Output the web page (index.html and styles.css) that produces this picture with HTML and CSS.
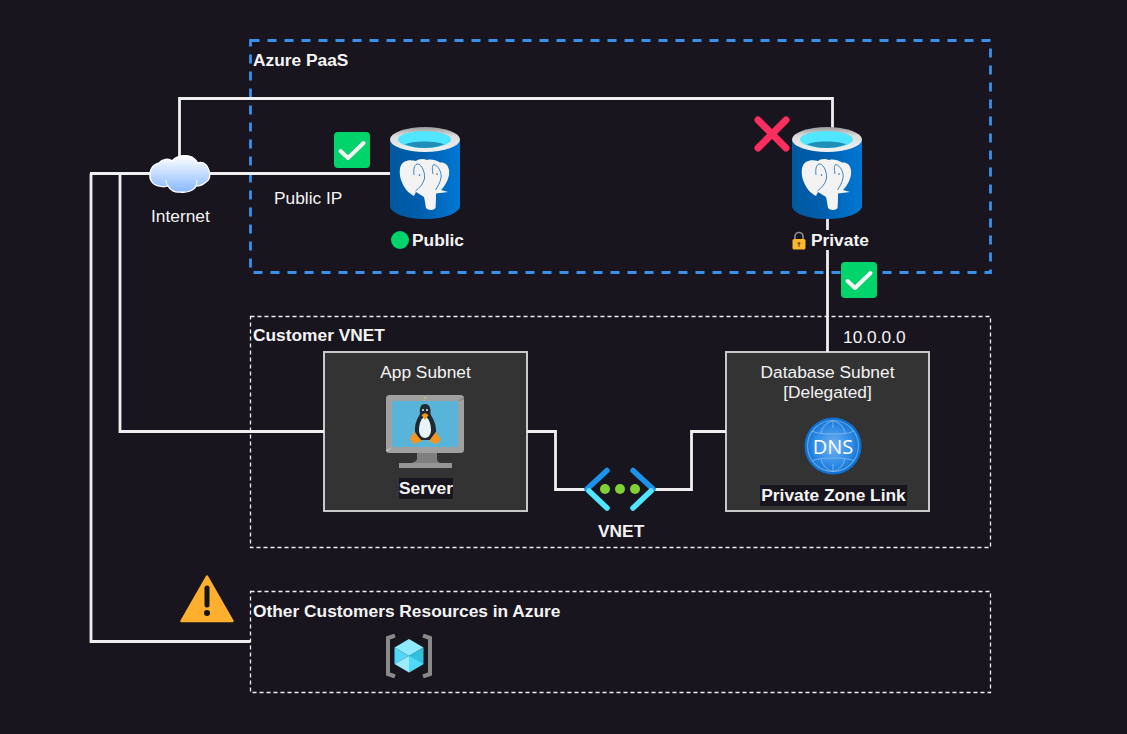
FILE: index.html
```html
<!DOCTYPE html>
<html lang="en">
<head>
<meta charset="utf-8">
<title>Azure PaaS network diagram</title>
<link rel="stylesheet" href="styles.css">
</head>
<body>
<main class="canvas">
  <svg class="layer" width="1127" height="734" viewBox="0 0 1127 734">
    <rect class="zone-line zone-blue" x="250.5" y="40.5" width="740" height="232"/>
    <rect class="zone-line zone-white" x="250.5" y="316.5" width="740" height="231"/>
    <rect class="zone-line zone-white" x="250.5" y="591.5" width="740" height="101"/>
  </svg>

  <div class="subnet subnet-app">
    <div class="subnet-title">App Subnet</div>
  </div>
  <div class="subnet subnet-db">
    <div class="subnet-title">Database Subnet<br>[Delegated]</div>
  </div>

  <svg class="layer" width="1127" height="734" viewBox="0 0 1127 734">
    <path class="wire" d="M179.5 158V98.500H832.500V132"/>
    <path class="wire" d="M90 173.500H155M205 173.500H392"/>
    <path class="wire" d="M120 173.500V431.500H324"/>
    <path class="wire" d="M91 173.500V641.500H250"/>
    <path class="wire" d="M527 431.500H555.500V489.500H590"/>
    <path class="wire" d="M650 489.500H691.500V431.500H726"/>
    <path class="wire" d="M827.500 215V352"/>
  </svg>

  <div class="zone-label label-paas">Azure PaaS</div>
  <div class="zone-label label-vnet">Customer VNET</div>
  <div class="zone-label label-other">Other Customers Resources in Azure</div>

  <div class="text text-internet">Internet</div>
  <div class="text text-ip">Public IP</div>
  <div class="text text-addr">10.0.0.0</div>

  <div class="status status-public"><span class="dot"></span><b>Public</b></div>
  <div class="status status-private">
    <svg class="lock" width="16" height="19" viewBox="0 0 16 19">
      <path d="M4 9V5.500a4 4 0 0 1 8 0V9" fill="none" stroke="#8f8f8f" stroke-width="1.600"/>
      <rect x="1.500" y="8" width="13" height="10.500" rx="1.600" fill="#fdb62f"/>
      <circle cx="8" cy="12.300" r="1.400" fill="#7a5a10"/>
      <rect x="7.400" y="12.500" width="1.200" height="3.200" fill="#7a5a10"/>
    </svg><b>Private</b>
  </div>

  <div class="tag tag-server">Server</div>
  <div class="tag tag-zone">Private Zone Link</div>
  <div class="tag-plain tag-vnet">VNET</div>

  <!-- cloud -->
  <svg class="icon icon-cloud" width="64" height="42" viewBox="0 0 64 42">
    <defs><linearGradient id="cloudFill" x1="0" y1="0" x2="0" y2="1"><stop offset="0" stop-color="#ffffff"/><stop offset="1" stop-color="#86b8ff"/></linearGradient></defs>
    <path d="M11 33C4 32 1 26 2 20C3 14 7 11 11 10C14 6 21 5 24 8C28 3 38 1 44 4C47 6 49 8 49.500 10C54 8 59 11 60.500 16C63 21 62 27 58 29C55 32 51 33 48 33C46 38 38 40 32 39C27 40 22 37 20 33C17 34 14 34 11 33Z" fill="url(#cloudFill)" stroke="#fff" stroke-width="1.300"/>
    <path d="M20 33C18 30 18 28 18 27M48 33C49 30 49 28 49 27" fill="none" stroke="#fff" stroke-width="1"/>
  </svg>

  <!-- check badges -->
  <svg class="icon icon-check-a" width="36" height="36" viewBox="0 0 36 36"><rect width="36" height="36" rx="4" fill="#00d46a"/><path d="M6.500 19L14 26L29.500 11" fill="none" stroke="#f4f4f4" stroke-width="4" stroke-linecap="round" stroke-linejoin="round"/></svg>
  <svg class="icon icon-check-b" width="36" height="36" viewBox="0 0 36 36"><rect width="36" height="36" rx="4" fill="#00d46a"/><path d="M6.500 19L14 26L29.500 11" fill="none" stroke="#f4f4f4" stroke-width="4" stroke-linecap="round" stroke-linejoin="round"/></svg>

  <!-- cross -->
  <svg class="icon icon-cross" width="40" height="40" viewBox="0 0 40 40"><path d="M5 5L33 33M33 5L5 33" stroke="#fb2e5f" stroke-width="7" stroke-linecap="round"/></svg>

  <!-- postgres cylinders -->
  <svg class="icon icon-pg-a" width="70" height="92" viewBox="0 0 70 92">
    <defs>
      <linearGradient id="pgBody" x1="0" y1="0" x2="1" y2="0"><stop offset="0" stop-color="#0058a0"/><stop offset=".45" stop-color="#005fae"/><stop offset="1" stop-color="#0078d4"/></linearGradient>
      <linearGradient id="pgRim" x1="0" y1="0" x2="0" y2="1"><stop offset="0" stop-color="#9a9a9a"/><stop offset=".35" stop-color="#dcdcdc"/><stop offset="1" stop-color="#f2f2f2"/></linearGradient>
      <symbol id="pg" viewBox="0 0 70 92">
        <path d="M0 12V79C0 86 16 92 35 92C54 92 70 86 70 79V12Z" fill="url(#pgBody)"/>
        <ellipse cx="35" cy="12.500" rx="35" ry="12.500" fill="url(#pgRim)"/>
        <ellipse cx="34.500" cy="12.500" rx="26.500" ry="8.500" fill="#50e6ff"/>
        <path d="M15 17.500C21 13.500 48 13.500 54 17.500C48 20 41 21 34.500 21C28 21 21 20 15 17.500Z" fill="#1f8fb8"/>
        <path d="M14 35C9 38 9 46 11 53C14 61 18 66 24 69L26 65L34 70C35 74 35.500 78 36 81C38 83.500 44 83.500 45.500 81C46 76 46 71 46 66.500L58 65L51 63C56 58 60 50 59 43C58 37 54 35 50 35.500C46 33 41 32 37 33C33 31 28 32 26 34C22 33 17 33 14 35Z" fill="#f3f3f3"/>
        <path d="M24 48C23 41 25 36.500 28 37C32 38 35 45 34.500 51C33.500 57 29 61 25.500 64M43 47C42 42 42 38 44 37.500C48 38.500 52 45 51 51C50 56 47.500 60 45.500 63" fill="none" stroke="#0a66b5" stroke-width=".8"/>
        <path d="M33 70C30 72 27 72 24 70" fill="none" stroke="#0a66b5" stroke-width=".8"/>
        <circle cx="29.500" cy="48" r=".8" fill="#0a66b5"/><circle cx="47" cy="47" r=".8" fill="#0a66b5"/>
      </symbol>
    </defs>
    <use href="#pg" width="70" height="92"/>
  </svg>
  <svg class="icon icon-pg-b" width="70" height="92" viewBox="0 0 70 92"><use href="#pg" width="70" height="92"/></svg>

  <!-- linux monitor -->
  <svg class="icon icon-linux" width="78" height="73" viewBox="0 0 78 73">
    <path d="M31 57H51V64C51 66 53 68 55 68H24C27 68 31 66 31 64Z" fill="#7f7f7f"/>
    <rect x="13" y="68" width="53" height="5" fill="#959595"/>
    <rect width="78" height="58" rx="3.500" fill="#a0a0a0"/>
    <path d="M0 55L6 52L1 57Z" fill="#c4c4c4"/>
    <path d="M72 6L78 1V5Z" fill="#8a8a8a"/>
    <rect x="6" y="6" width="66" height="46" fill="#59b4d9"/>
    <circle cx="39" cy="3" r="1" fill="#b8d432"/>
    <path d="M39 9C34 9 33.500 14 34 19C31 24 28.500 29 29 37L34 45H44L50 37C50.500 29 47 24 44.500 19C45 14 44 9 39 9Z" fill="#1f2a30"/>
    <path d="M39 22C35.500 22 33 29 33 35C33 40 36 43 39 43C42 43 45 40 45 35C45 29 42.500 22 39 22Z" fill="#e8f3f8"/>
    <path d="M35.500 20L39 18L42.500 20L39 25Z" fill="#f7941d"/>
    <path d="M24 44L28 37L36 46L28 49Z" fill="#f7941d"/>
    <path d="M55 45L50 37L43 46L50 49Z" fill="#f7941d"/>
    <circle cx="37" cy="15" r=".9" fill="#fff"/><circle cx="41" cy="15" r=".9" fill="#fff"/>
  </svg>

  <!-- dns globe -->
  <svg class="icon icon-dns" width="58" height="58" viewBox="0 0 58 58">
    <defs><radialGradient id="dnsFill" cx=".5" cy=".5" r=".5"><stop offset="0" stop-color="#72b4f5"/><stop offset=".7" stop-color="#2c88e4"/><stop offset="1" stop-color="#0a6ecd"/></radialGradient></defs>
    <circle cx="29" cy="29" r="28.500" fill="url(#dnsFill)"/>
    <g fill="none" stroke="#9cc8f2" stroke-opacity=".55" stroke-width="1.200">
      <circle cx="29" cy="29" r="25.500"/>
      <path d="M29 3.500V11M29 47V54.500M8 14C14 18 44 18 50 14M8 44C14 40 44 40 50 44M29 3.500C21 6 18 11 17 16M29 3.500C37 6 40 11 41 16M29 54.500C21 52 18 47 17 42M29 54.500C37 52 40 47 41 42"/>
    </g>
    <text class="dns-text" x="29" y="36.500" text-anchor="middle">DNS</text>
  </svg>

  <!-- vnet chevrons -->
  <svg class="icon icon-vnet" width="72" height="44" viewBox="0 0 72 44">
    <path d="M23 3.500L3 22" fill="none" stroke="#1b93eb" stroke-width="5.500" stroke-linecap="round"/>
    <path d="M5 24L23 41" fill="none" stroke="#50e6ff" stroke-width="5.500" stroke-linecap="round"/>
    <path d="M49 3.500L69 22" fill="none" stroke="#1b93eb" stroke-width="5.500" stroke-linecap="round"/>
    <path d="M67 24L49 41" fill="none" stroke="#50e6ff" stroke-width="5.500" stroke-linecap="round"/>
    <circle cx="21" cy="22" r="5" fill="#7fd136"/><circle cx="36" cy="22" r="5" fill="#7fd136"/><circle cx="51" cy="22" r="5" fill="#7fd136"/>
  </svg>

  <!-- warning -->
  <svg class="icon icon-warn" width="54" height="48" viewBox="0 0 54 48">
    <path d="M27 1.500L52.500 46H1.500Z" fill="#ffaf2e" stroke="#ffaf2e" stroke-width="2.500" stroke-linejoin="round"/>
    <path d="M27 13V30" stroke="#141414" stroke-width="5" stroke-linecap="round"/>
    <circle cx="27" cy="38" r="3" fill="#141414"/>
  </svg>

  <!-- container cube -->
  <svg class="icon icon-cube" width="46" height="44" viewBox="0 0 46 44">
    <path d="M9 1.500L2 4V40L9 42.500M37 1.500L44 4V40L37 42.500" fill="none" stroke="#8a8a8a" stroke-width="4"/>
    <path d="M23 5L37.500 13.500L23 22L8.500 13.500Z" fill="#8eeaff"/>
    <path d="M37.500 13.500V30L23 38.500V22Z" fill="#32bedd"/>
    <path d="M8.500 13.500V30L23 22Z" fill="#50d8f8"/>
    <path d="M8.500 30L23 22V38.500Z" fill="#9cebff"/>
    <path d="M37.500 30L23 22V38.500Z" fill="#50d8f8"/>
  </svg>
</main>
</body>
</html>
```
FILE: styles.css
```css
* { box-sizing: border-box; }
html, body { margin: 0; padding: 0; background: #18151e; overflow: hidden; }
body { font-family: "Liberation Sans", Arial, sans-serif; font-size: 17.33px; color: #f4f4f4; }

.canvas { position: relative; width: 1127px; height: 734px; background: #18151e; }
.layer { position: absolute; left: 0; top: 0; }

.zone-line { fill: none; }
.zone-blue { stroke: #3990ea; stroke-width: 2.800; stroke-dasharray: 9 8; }
.zone-white { stroke: #f0f0f0; stroke-width: 1.300; stroke-dasharray: 4 3; }

.wire { fill: none; stroke: #efefef; stroke-width: 2.800; }

.subnet { position: absolute; top: 351px; width: 205px; height: 161px; background: #333333; border: 2px solid #c8c8c8; }
.subnet-app { left: 323px; }
.subnet-db { left: 725px; }
.subnet-title { text-align: center; line-height: 20px; padding-top: 9px; }

.zone-label { position: absolute; left: 253px; font-weight: 700; line-height: 20px; white-space: nowrap; }
.label-paas { top: 50px; }
.label-vnet { top: 325px; }
.label-other { top: 601px; }

.text { position: absolute; line-height: 20px; white-space: nowrap; }
.text-internet { left: 151px; top: 206px; }
.text-ip { left: 274px; top: 188px; }
.text-addr { left: 843px; top: 327px; }

.status { position: absolute; display: flex; align-items: center; line-height: 20px; white-space: nowrap; background: #18151e; }
.status-public { left: 391px; top: 230px; gap: 3px; }
.status-private { left: 790px; top: 230px; height: 20px; width: 80px; gap: 4px; padding-left: 1px; }
.dot { width: 18px; height: 18px; border-radius: 50%; background: #00d46a; }
.lock { flex: none; }

.tag { position: absolute; font-weight: 700; line-height: 20px; background: #18151e; text-align: center; white-space: nowrap; }
.tag-server { left: 399px; top: 478px; width: 54px; height: 21px; }
.tag-zone { left: 760px; top: 485px; width: 147px; height: 21px; }
.tag-plain { position: absolute; font-weight: 700; line-height: 20px; }
.tag-vnet { left: 598px; top: 521px; }

.icon { position: absolute; display: block; }
.icon-cloud { left: 148px; top: 153px; }
.icon-check-a { left: 334px; top: 132px; }
.icon-check-b { left: 841px; top: 262px; }
.icon-cross { left: 753px; top: 115px; }
.icon-pg-a { left: 390px; top: 127px; }
.icon-pg-b { left: 792px; top: 127px; }
.icon-linux { left: 386px; top: 395px; }
.icon-dns { left: 804px; top: 417px; }
.icon-vnet { left: 584px; top: 467px; }
.icon-warn { left: 180px; top: 575px; }
.icon-cube { left: 386px; top: 634px; }
.dns-text { font-family: "Open Sans", sans-serif; font-size: 20px; fill: #ffffff; }
```
